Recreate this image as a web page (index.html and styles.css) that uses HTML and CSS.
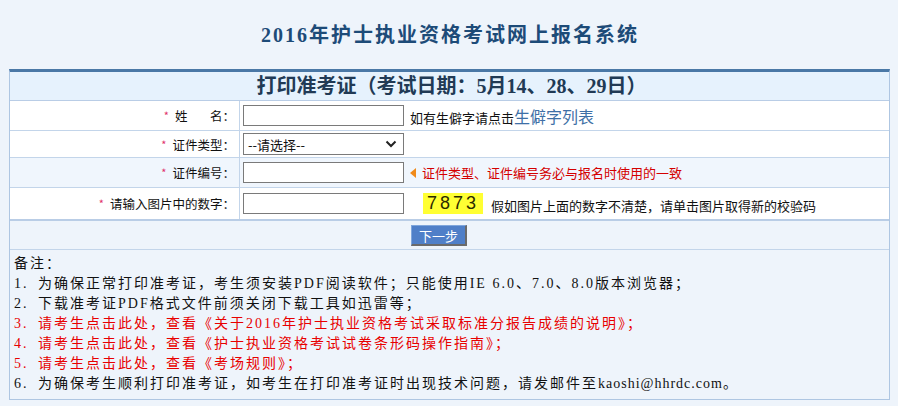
FILE: index.html
```html
<!DOCTYPE html>
<html>
<head>
<meta charset="utf-8">
<title>2016年护士执业资格考试网上报名系统</title>
<link rel="stylesheet" href="styles.css">
</head>
<body>
<div class="top">
  <h1 class="site-title">2016年护士执业资格考试网上报名系统</h1>
</div>
<div class="panel">
  <div class="panel-head">打印准考证（考试日期：5月14、28、29日）</div>
  <table class="form">
    <tr class="r1">
      <td class="lab"><span class="req">*</span><span class="xm"><span>姓</span><span>名：</span></span></td>
      <td class="val"><input class="txt" type="text"><span class="hint">如有生僻字请点击<a class="link" href="#">生僻字列表</a></span></td>
    </tr>
    <tr class="r2">
      <td class="lab"><span class="req">*</span>证件类型：</td>
      <td class="val"><span class="sel"><span class="sel-text">--请选择--</span><svg class="chev" width="12" height="8" viewBox="0 0 12 8"><path d="M1.5 1.5 L6 6 L10.5 1.5" fill="none" stroke="#222" stroke-width="2"/></svg></span></td>
    </tr>
    <tr class="r3">
      <td class="lab"><span class="req">*</span>证件编号：</td>
      <td class="val"><input class="txt" type="text"><span class="tri"></span><span class="warn">证件类型、证件编号务必与报名时使用的一致</span></td>
    </tr>
    <tr class="r4">
      <td class="lab"><span class="req">*</span>请输入图片中的数字：</td>
      <td class="val"><input class="txt" type="text"><span class="captcha">7873</span><span class="hint2">假如图片上面的数字不清楚，请单击图片取得新的校验码</span></td>
    </tr>
    <tr class="r5">
      <td class="btn-cell" colspan="2"><span class="btn">下一步</span></td>
    </tr>
  </table>
  <div class="notes">
    <div>备注：</div>
    <div><span class="num">1.</span>为确保正常打印准考证，考生须安装PDF阅读软件；只能使用IE 6.0、7.0、8.0版本浏览器；</div>
    <div><span class="num">2.</span>下载准考证PDF格式文件前须关闭下载工具如迅雷等；</div>
    <div class="red"><span class="num">3.</span>请考生点击此处，查看《关于2016年护士执业资格考试采取标准分报告成绩的说明》；</div>
    <div class="red"><span class="num">4.</span>请考生点击此处，查看《护士执业资格考试试卷条形码操作指南》；</div>
    <div class="red"><span class="num">5.</span>请考生点击此处，查看《考场规则》；</div>
    <div><span class="num">6.</span>为确保考生顺利打印准考证，如考生在打印准考证时出现技术问题，请发邮件至<span class="mail">kaoshi@hhrdc.com</span>。</div>
  </div>
</div>
</body>
</html>
```
FILE: styles.css
```css
html, body {
  margin: 0;
  padding: 0;
  background: #eef4fb;
  font-family: "Noto Sans CJK SC", sans-serif;
}
.top {
  height: 69px;
  display: flex;
  align-items: center;
  justify-content: center;
}
.site-title {
  margin: 0;
  font-family: "Liberation Serif", "Noto Sans CJK SC", serif;
  font-size: 20px;
  font-weight: bold;
  letter-spacing: 2px;
  color: #1d4b78;
  line-height: 1;
  padding-left: 2px;
}
.panel {
  margin: 0 8px 0 9px;
  width: 879px;
  border-top: 3px solid #4a78a6;
  border-left: 1px solid #aec6e2;
  border-right: 1px solid #aec6e2;
  border-bottom: 1px solid #aec6e2;
  background: #eef4fb;
}
.panel-head {
  height: 28px;
  line-height: 28px;
  text-align: center;
  background: #e6f2fd;
  border-bottom: 1px solid #b9cde6;
  font-family: "Liberation Serif", "Noto Sans CJK SC", serif;
  font-size: 20px;
  font-weight: bold;
  color: #213a55;
  padding-left: 4px;
}
.form {
  width: 100%;
  border-collapse: collapse;
  font-size: 12px;
  color: #111;
}
.form td {
  border-bottom: 1px solid #c3d5ea;
  padding: 0;
  vertical-align: middle;
}
.r1 td { height: 29px; background: #ffffff; }
.r2 td { height: 26px; background: #ffffff; }
.r3 td { height: 29px; background: #f0f6fd; }
.r4 td { height: 31px; background: #ffffff; border-bottom: 2px solid #b9cde6; }
.r5 td { height: 28px; background: #eef4fb; }
.lab {
  width: 225px;
  text-align: right;
  padding-right: 4px !important;
  border-right: 1px solid #c3d5ea;
  white-space: nowrap;
  font-size: 12.5px;
}
.req {
  color: #e0306a;
  font-size: 11px;
  margin-right: 6px;
  position: relative;
  top: -1px;
}
.xm {
  display: inline-flex;
  width: 60px;
  justify-content: space-between;
}
.val {
  padding-left: 3px !important;
  white-space: nowrap;
}
.txt {
  width: 161px;
  height: 21px;
  box-sizing: border-box;
  border: 1px solid #7a7a7a;
  margin: 0;
  padding: 0;
  vertical-align: middle;
  background: #fff;
}
.hint {
  font-size: 13px;
  margin-left: 6px;
  vertical-align: middle;
}
.link {
  color: #3e6fa6;
  font-size: 16px;
  text-decoration: none;
}
.sel {
  display: inline-flex;
  align-items: center;
  justify-content: space-between;
  width: 161px;
  height: 22px;
  box-sizing: border-box;
  border: 1px solid #7a7a7a;
  background: #fff;
  padding: 0 6px 0 4px;
  vertical-align: middle;
  font-size: 13px;
}
.tri {
  display: inline-block;
  width: 0;
  height: 0;
  border-top: 5px solid transparent;
  border-bottom: 5px solid transparent;
  border-right: 6px solid #f08a1a;
  margin-left: 6px;
  vertical-align: middle;
}
.warn {
  color: #d40000;
  font-size: 13px;
  margin-left: 6px;
  vertical-align: middle;
}
.captcha {
  display: inline-block;
  width: 60px;
  height: 21px;
  line-height: 21px;
  background: #ffff33;
  margin-left: 19px;
  vertical-align: middle;
  text-align: center;
  font-family: "Liberation Sans", sans-serif;
  font-size: 18px;
  letter-spacing: 3px;
  color: #2a2a00;
}
.hint2 {
  font-size: 13px;
  margin-left: 8px;
  vertical-align: middle;
  position: relative;
  top: 2px;
}
.btn-cell {
  padding-left: 401px !important;
}
.btn {
  display: inline-block;
  width: 56px;
  height: 21px;
  line-height: 19px;
  box-sizing: border-box;
  background: #4f7fc8;
  border-top: 1px solid #7fa6dc;
  border-left: 1px solid #7fa6dc;
  border-right: 2px solid #6a6a6a;
  border-bottom: 2px solid #6a6a6a;
  color: #fff;
  font-size: 13px;
  text-align: center;
  vertical-align: middle;
}
.notes {
  padding: 4px 4px 5px 4px;
  font-family: "Liberation Serif", "Noto Sans CJK SC", serif;
  font-size: 14px;
  letter-spacing: 2px;
  line-height: 20px;
  color: #111;
}
.notes .num {
  display: inline-block;
  width: 24px;
}
.notes .mail {
  letter-spacing: 1px;
}
.notes .red {
  color: #e80000;
}
```
